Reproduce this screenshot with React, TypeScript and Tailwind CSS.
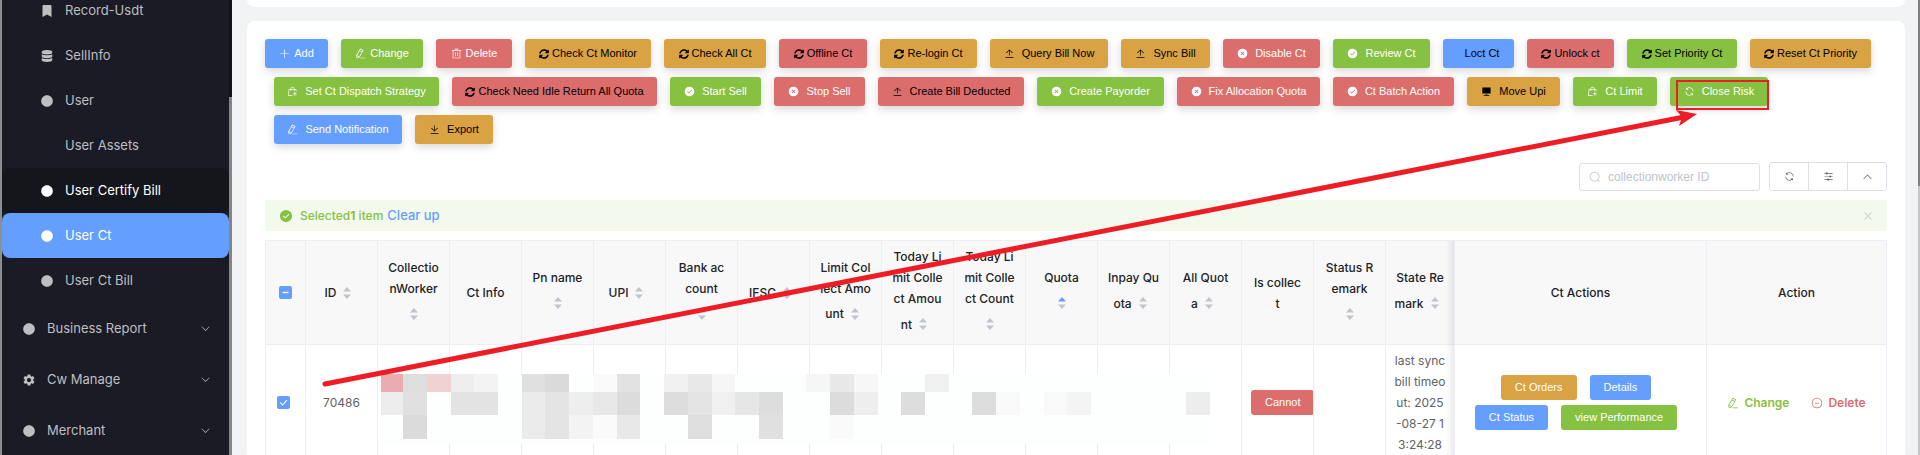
import clsx from "clsx";
import { FaBookmark, FaCircle, FaDatabase, FaSyncAlt } from "react-icons/fa";
import { MdSettings } from "react-icons/md";

const icons = {
  plus: "M480 480V128a32 32 0 0 1 64 0v352h352a32 32 0 1 1 0 64H544v352a32 32 0 1 1-64 0V544H128a32 32 0 0 1 0-64z",
  edit: "m199.04 672.64 193.984 112 224-387.968-193.92-112-224 388.032zm-23.872 60.16 32.896 148.288 144.896-45.696zM455.04 229.248l193.92 112 56.704-98.112-193.984-112-56.64 98.112zM104.32 708.8l384-665.024 304.768 175.936L409.152 884.8h.064l-248.448 78.336zm384 254.272v-64h448v64z",
  trash: "M160 256H96a32 32 0 0 1 0-64h256V95.936a32 32 0 0 1 32-32h256a32 32 0 0 1 32 32V192h256a32 32 0 1 1 0 64h-64v672a32 32 0 0 1-32 32H192a32 32 0 0 1-32-32zm448-64v-64H416v64zM224 896h576V256H224zm192-128a32 32 0 0 1-32-32V416a32 32 0 0 1 64 0v320a32 32 0 0 1-32 32m192 0a32 32 0 0 1-32-32V416a32 32 0 0 1 64 0v320a32 32 0 0 1-32 32",
  upload: "M160 832h704a32 32 0 1 1 0 64H160a32 32 0 1 1 0-64m384-578.304V704h-64V247.296L237.248 490.048 192 444.8 508.8 128l316.8 316.8-45.312 45.248z",
  download: "M160 832h704a32 32 0 1 1 0 64H160a32 32 0 1 1 0-64m384-253.696 236.288-236.352 45.248 45.248L508.8 704 192 387.2l45.248-45.248L480 584.704V128h64z",
  check: "M512 64a448 448 0 1 1 0 896 448 448 0 0 1 0-896m-55.808 536.384-99.52-99.584a38.4 38.4 0 1 0-54.336 54.336l126.72 126.72a38.272 38.272 0 0 0 54.336 0l262.4-262.464a38.4 38.4 0 1 0-54.272-54.336z",
  cross: "M512 64a448 448 0 1 1 0 896 448 448 0 0 1 0-896m0 393.664L407.936 353.6a38.4 38.4 0 1 0-54.336 54.336L457.664 512 353.6 616.064a38.4 38.4 0 1 0 54.336 54.336L512 566.336 616.064 670.4a38.4 38.4 0 1 0 54.336-54.336L566.336 512 670.4 407.936a38.4 38.4 0 1 0-54.336-54.336z",
  refresh: "M771.776 794.88A384 384 0 0 1 128 512h64a320 320 0 0 0 555.712 216.448H654.72a32 32 0 1 1 0-64h149.056a32 32 0 0 1 32 32v148.928a32 32 0 1 1-64 0v-50.56zM276.288 295.616h92.992a32 32 0 0 1 0 64H220.16a32 32 0 0 1-32-32V178.56a32 32 0 0 1 64 0v50.56A384 384 0 0 1 896.128 512h-64a320 320 0 0 0-555.776-216.384z",
  search: "m795.904 750.72 124.992 124.928a32 32 0 0 1-45.248 45.248L750.656 795.904a416 416 0 1 1 45.248-45.248zM480 832a352 352 0 1 0 0-704 352 352 0 0 0 0 704",
  up: "m488.832 344.32-339.84 356.672a32 32 0 0 0 0 44.16l.384.384a29.44 29.44 0 0 0 42.688 0l320-335.872 319.872 335.872a29.44 29.44 0 0 0 42.688 0l.384-.384a32 32 0 0 0 0-44.16L535.168 344.32a32 32 0 0 0-46.336 0",
  down: "M831.872 340.864 512 652.672 192.128 340.864a30.592 30.592 0 0 0-42.752 0 29.12 29.12 0 0 0 0 41.6L489.664 714.24a32 32 0 0 0 44.672 0l340.288-331.712a29.12 29.12 0 0 0 0-41.728 30.592 30.592 0 0 0-42.752 0z",
  close: "M764.288 214.592 512 466.88 259.712 214.592a31.936 31.936 0 0 0-45.12 45.12L466.752 512 214.528 764.224a31.936 31.936 0 1 0 45.12 45.184L512 557.184l252.288 252.288a31.936 31.936 0 0 0 45.12-45.12L557.12 512.064l252.288-252.352a31.936 31.936 0 1 0-45.12-45.184z",
  remove: "M352 480h320a32 32 0 1 1 0 64H352a32 32 0 0 1 0-64M512 896a384 384 0 1 0 0-768 384 384 0 0 0 0 768m0 64a448 448 0 1 1 0-896 448 448 0 0 1 0 896",
  operation: "M389.44 768a96.064 96.064 0 0 1 181.12 0H896v64H570.56a96.064 96.064 0 0 1-181.12 0H128v-64zm192-288a96.064 96.064 0 0 1 181.12 0H896v64H762.56a96.064 96.064 0 0 1-181.12 0H128v-64zm-320-288a96.064 96.064 0 0 1 181.12 0H896v64H442.56a96.064 96.064 0 0 1-181.12 0H128v-64z",
  sell: "M704 288h131.072a32 32 0 0 1 31.808 28.8L886.4 512h-64.384l-16-160H704v96a32 32 0 1 1-64 0v-96H384v96a32 32 0 0 1-64 0v-96H217.92l-51.2 512H512v64H131.328a32 32 0 0 1-31.808-35.2l57.6-576a32 32 0 0 1 31.808-28.8H320v-22.336C320 154.688 405.504 64 512 64s192 90.688 192 201.664v22.4zm-64 0v-22.336C640 189.248 582.272 128 512 128c-70.272 0-128 61.248-128 137.664v22.4h256zm201.408 483.84L768 698.496V928a32 32 0 1 1-64 0V698.496l-73.344 73.344a32 32 0 1 1-45.248-45.248l128-128a32 32 0 0 1 45.248 0l128 128a32 32 0 1 1-45.248 45.248",
  monitor: "M448 832v-64h128v64h192v64H256v-64zM128 704V128h768v576z",
};

type IconName = keyof typeof icons;

const Icon = ({ name, className }: { name: IconName; className?: string }) => (
  <svg viewBox="0 0 1024 1024" fill="currentColor" fillRule="evenodd" className={clsx("shrink-0", className)} aria-hidden="true">
    <path d={icons[name]} />
  </svg>
);

const tones = {
  blue: "bg-[#649eff]",
  green: "bg-[#86c142]",
  red: "bg-[#dc6d6d]",
  amber: "bg-[#d9a243]",
};

type Tone = keyof typeof tones;
type Tool = { label: string; tone: Tone; icon: IconName | "sync" | "none"; width: string; dark?: boolean; tight?: boolean };

const toolRows: Tool[][] = [
  [
    { label: "Add", tone: "blue", icon: "plus", width: "w-[63px]", tight: true },
    { label: "Change", tone: "green", icon: "edit", width: "w-[82px]", tight: true },
    { label: "Delete", tone: "red", icon: "trash", width: "w-[76px]", tight: true },
    { label: "Check Ct Monitor", tone: "amber", icon: "sync", width: "w-[126px]", dark: true },
    { label: "Check All Ct", tone: "amber", icon: "sync", width: "w-[102px]", dark: true },
    { label: "Offline Ct", tone: "red", icon: "sync", width: "w-[88px]", dark: true },
    { label: "Re-login Ct", tone: "amber", icon: "sync", width: "w-[97px]", dark: true },
    { label: "Query Bill Now", tone: "amber", icon: "upload", width: "w-[118px]", dark: true },
    { label: "Sync Bill", tone: "amber", icon: "upload", width: "w-[89px]", dark: true },
    { label: "Disable Ct", tone: "red", icon: "cross", width: "w-[97px]" },
    { label: "Review Ct", tone: "green", icon: "check", width: "w-[97px]" },
    { label: "Loct Ct", tone: "blue", icon: "none", width: "w-[71px]", dark: true },
    { label: "Unlock ct", tone: "red", icon: "sync", width: "w-[87px]", dark: true },
    { label: "Set Priority Ct", tone: "green", icon: "sync", width: "w-[110px]", dark: true },
    { label: "Reset Ct Priority", tone: "amber", icon: "sync", width: "w-[121px]", dark: true },
  ],
  [
    { label: "Set Ct Dispatch Strategy", tone: "green", icon: "sell", width: "w-[165px]" },
    { label: "Check Need Idle Return All Quota", tone: "red", icon: "sync", width: "w-[205px]", dark: true },
    { label: "Start Sell", tone: "green", icon: "check", width: "w-[91px]" },
    { label: "Stop Sell", tone: "red", icon: "cross", width: "w-[91px]" },
    { label: "Create Bill Deducted", tone: "red", icon: "upload", width: "w-[146px]", dark: true },
    { label: "Create Payorder", tone: "green", icon: "cross", width: "w-[127px]" },
    { label: "Fix Allocation Quota", tone: "red", icon: "cross", width: "w-[143px]" },
    { label: "Ct Batch Action", tone: "red", icon: "check", width: "w-[121px]" },
    { label: "Move Upi", tone: "amber", icon: "monitor", width: "w-[93px]", dark: true },
    { label: "Ct Limit", tone: "green", icon: "sell", width: "w-[84px]" },
    { label: "Close Risk", tone: "green", icon: "refresh", width: "w-[98px]" },
  ],
  [
    { label: "Send Notification", tone: "blue", icon: "edit", width: "w-[128px]" },
    { label: "Export", tone: "amber", icon: "download", width: "w-[78px]", dark: true },
  ],
];

const ToolButton = ({ label, tone, icon, width, dark, tight }: Tool) => (
  <button
    type="button"
    className={clsx(
      "flex h-[29px] items-center justify-center whitespace-nowrap rounded-[3px] shadow-[0_3px_8px_rgba(0,0,0,0.16)]",
      width,
      tones[tone],
      dark ? "text-black" : "text-white",
      icon === "sync" ? "gap-[3px]" : tight ? "gap-1" : "gap-[7px]",
    )}
  >
    {icon === "sync" && <FaSyncAlt className="size-[10px]" />}
    {icon !== "sync" && icon !== "none" && <Icon name={icon} className="size-[11px]" />}
    <span className={clsx(icon === "none" && "pl-[7px]")}>{label}</span>
  </button>
);

const subMenu = [
  { label: "Record-Usdt", icon: <FaBookmark className="size-3" /> },
  { label: "SellInfo", icon: <FaDatabase className="size-3" /> },
  { label: "User", icon: <FaCircle className="size-3" /> },
  { label: "User Assets", icon: null },
  { label: "User Certify Bill", icon: <FaCircle className="size-3" />, state: "hover" },
  { label: "User Ct", icon: <FaCircle className="size-3" />, state: "active" },
  { label: "User Ct Bill", icon: <FaCircle className="size-3" /> },
];

const mainMenu = [
  { label: "Business Report", icon: <FaCircle className="size-3" /> },
  { label: "Cw Manage", icon: <MdSettings className="-mx-px size-[14px]" /> },
  { label: "Merchant", icon: <FaCircle className="size-3" /> },
];

const Sidebar = () => (
  <aside className="flex w-[232px] shrink-0 border-l-2 border-[#8c8e8f] bg-[#1b1b25] text-[13px] text-[#bfbfc1]">
    <nav className="-mt-3 flex-1">
      <ul>
        {subMenu.map((item) => (
          <li key={item.label}>
            <a
              href="#"
              className={clsx(
                "flex h-[45px] items-center gap-3 rounded-lg pl-[39px]",
                item.state === "hover" && "bg-[#15151c] text-white",
                item.state === "active" && "bg-[#649eff] text-white",
              )}
            >
              <span className="flex w-3 justify-center">{item.icon}</span>
              {item.label}
            </a>
          </li>
        ))}
        {mainMenu.map((item) => (
          <li key={item.label}>
            <button type="button" className="flex h-[51px] w-full items-center gap-3 pl-[21px] pr-[18px]">
              <span className="flex w-3 justify-center">{item.icon}</span>
              {item.label}
              <Icon name="down" className="ml-auto size-[11px]" />
            </button>
          </li>
        ))}
      </ul>
    </nav>
    <div className="w-[3px] bg-[#15111a] pt-[97px]">
      <div className="h-full bg-[#858585]" />
    </div>
  </aside>
);

type Column = { lines: string[]; sort?: "inline" | "below"; ascending?: boolean };

const columns: Column[] = [
  { lines: ["ID"], sort: "inline" },
  { lines: ["Collectio", "nWorker"], sort: "below" },
  { lines: ["Ct Info"] },
  { lines: ["Pn name"], sort: "below" },
  { lines: ["UPI"], sort: "inline" },
  { lines: ["Bank ac", "count"], sort: "below" },
  { lines: ["IFSC"], sort: "inline" },
  { lines: ["Limit Col", "lect Amo", "unt"], sort: "inline" },
  { lines: ["Today Li", "mit Colle", "ct Amou", "nt"], sort: "inline" },
  { lines: ["Today Li", "mit Colle", "ct Count"], sort: "below" },
  { lines: ["Quota"], sort: "below", ascending: true },
  { lines: ["Inpay Qu", "ota"], sort: "inline" },
  { lines: ["All Quot", "a"], sort: "inline" },
  { lines: ["Is collec", "t"] },
  { lines: ["Status R", "emark"], sort: "below" },
  { lines: ["State Re", "mark"], sort: "inline" },
];

const SortCaret = ({ ascending }: { ascending?: boolean }) => (
  <span className="flex w-[22px] justify-center">
    <svg width="8" height="12" viewBox="0 0 8 12" aria-hidden="true">
      <path d="M0 4.5 4 0l4 4.5z" fill={ascending ? "#649eff" : "#c0c4cc"} />
      <path d="M0 7.5 4 12l4-4.5z" fill="#c0c4cc" />
    </svg>
  </span>
);

const HeaderCell = ({ column }: { column: Column }) => {
  const inline = column.sort === "inline";
  const lines = inline ? column.lines.slice(0, -1) : column.lines;

  return (
    <th className="whitespace-nowrap border-b border-r border-[#ebeef5] font-medium">
      {lines.map((line) => (
        <div key={line}>{line}</div>
      ))}
      {column.sort && (
        <div className="flex h-[30px] items-center justify-center">
          {inline && column.lines[column.lines.length - 1]}
          <SortCaret ascending={column.ascending} />
        </div>
      )}
    </th>
  );
};

const FixedShadow = () => (
  <span className="absolute -left-[9px] -bottom-px top-0 w-2 bg-linear-to-r from-transparent to-black/8" aria-hidden="true" />
);

const SmallButton = ({ label, tone }: { label: string; tone: Tone }) => (
  <button type="button" className={clsx("h-[25px] whitespace-nowrap rounded-[3px] px-[14px] text-[11px] leading-none text-white font-['Liberation_Sans',Arial,sans-serif]", tones[tone])}>
    {label}
  </button>
);

const CheckBox = ({ label, partial }: { label: string; partial?: boolean }) => (
  <label className="relative mx-auto block size-[13px]">
    <input type="checkbox" defaultChecked aria-label={label} className="block size-[13px] appearance-none rounded-[2px] bg-[#649eff]" />
    <svg viewBox="0 0 13 13" className="pointer-events-none absolute inset-0" fill="none" stroke="white" aria-hidden="true">
      <path d={partial ? "M3.5 6.5h6" : "M3.2 6.4 5.6 9l4.3-4.8"} strokeWidth={partial ? 1.4 : 1.1} />
    </svg>
  </label>
);

const DataTable = () => (
  <table className="w-full table-fixed border-separate border-spacing-0 border-l border-t border-[#ebeef5] text-center text-xs leading-[21px] text-[#606266]">
    <colgroup>
      <col className="w-10" />
      {columns.map((column, i) => (
        <col key={i} className={i === columns.length - 1 ? "w-[69px]" : "w-[72px]"} />
      ))}
      <col />
      <col className="w-[180px]" />
    </colgroup>
    <thead className="bg-[#f8f8f9] text-[#222226]">
      <tr className="h-[104px]">
        <th className="border-b border-r border-[#ebeef5]">
          <CheckBox label="Select all rows" partial />
        </th>
        {columns.map((column, i) => (
          <HeaderCell key={i} column={column} />
        ))}
        <th className="relative border-b border-r border-[#ebeef5] font-medium">
          <FixedShadow />
          Ct Actions
        </th>
        <th className="border-b border-r border-[#ebeef5] font-medium">Action</th>
      </tr>
    </thead>
    <tbody>
      <tr className="h-[116px]">
        <td className="border-b border-r border-[#ebeef5] pr-1">
          <CheckBox label="Select row 70486" />
        </td>
        <td className="border-b border-r border-[#ebeef5]">70486</td>
        {columns.slice(1, 13).map((column, i) => (
          <td key={i} className="border-b border-r border-[#ebeef5]" />
        ))}
        <td className="overflow-hidden border-b border-r border-[#ebeef5] pl-[9px] text-left">
          <SmallButton label="Cannot" tone="red" />
        </td>
        <td className="border-b border-r border-[#ebeef5]" />
        <td className="whitespace-nowrap border-b border-r border-[#ebeef5]">
          last sync
          <br />
          bill timeo
          <br />
          ut: 2025
          <br />
          -08-27 1
          <br />
          3:24:28
        </td>
        <td className="relative border-b border-r border-[#ebeef5] pr-[9px]">
          <FixedShadow />
          <div className="flex flex-wrap justify-center gap-x-[13px] gap-y-[5px] px-3">
            <SmallButton label="Ct Orders" tone="amber" />
            <SmallButton label="Details" tone="blue" />
            <SmallButton label="Ct Status" tone="blue" />
            <SmallButton label="view Performance" tone="green" />
          </div>
        </td>
        <td className="border-b border-r border-[#ebeef5]">
          <div className="flex items-center justify-center gap-[22px] font-semibold">
            <a href="#" className="flex items-center gap-[5px] text-[#86c142]">
              <Icon name="edit" className="size-3" />
              Change
            </a>
            <a href="#" className="flex items-center gap-[5px] text-[#dc6d6d]">
              <Icon name="remove" className="size-3" />
              Delete
            </a>
          </div>
        </td>
      </tr>
    </tbody>
  </table>
);

// x, y, width, height, fill
const mosaic: [number, number, number, number, string][] = [
  [0, 0, 22, 18, "#e8acb1"], [22, 0, 24, 18, "#dedede"], [46, 0, 24, 18, "#f0d2d5"], [70, 0, 23, 18, "#eeeeee"], [93, 0, 24, 18, "#f3f3f3"],
  [141, 0, 23, 18, "#e0e0e0"], [164, 0, 24, 18, "#dadada"], [212, 0, 24, 18, "#fafafa"], [236, 0, 23, 18, "#e2e2e2"],
  [283, 0, 24, 18, "#f1f1f1"], [307, 0, 24, 18, "#e8e8e8"], [331, 0, 23, 18, "#f6f6f6"],
  [425, 0, 24, 18, "#f6f6f6"], [449, 0, 24, 18, "#e8e8e8"], [473, 0, 24, 18, "#f7f7f7"], [544, 0, 24, 18, "#f0f0f0"],
  [0, 18, 22, 23, "#ededed"], [22, 18, 24, 23, "#e0e0e0"], [70, 18, 47, 23, "#e3e3e3"],
  [141, 18, 23, 23, "#ebebeb"], [164, 18, 24, 23, "#e4e4e4"], [188, 18, 24, 23, "#eeeeee"], [212, 18, 24, 23, "#e8e8e8"], [236, 18, 23, 23, "#dcdcdc"],
  [283, 18, 24, 23, "#dddddd"], [307, 18, 24, 23, "#e4e4e4"], [331, 18, 23, 23, "#f0f0f0"], [354, 18, 24, 23, "#e6e6e6"], [378, 18, 24, 23, "#dddddd"],
  [449, 18, 24, 23, "#dcdcdc"], [473, 18, 24, 23, "#eeeeee"], [520, 18, 24, 23, "#dddddd"], [591, 18, 24, 23, "#dddddd"], [615, 18, 24, 23, "#f9f9f9"],
  [663, 18, 23, 23, "#f9f9f9"], [686, 18, 24, 23, "#f4f4f4"], [805, 18, 24, 23, "#ededed"],
  [22, 41, 24, 24, "#dbdbdb"], [141, 41, 23, 24, "#ebebeb"], [164, 41, 24, 24, "#e4e4e4"], [188, 41, 24, 24, "#f3f3f3"], [212, 41, 24, 24, "#fafafa"], [236, 41, 23, 24, "#e8e8e8"],
  [307, 41, 24, 24, "#dedede"], [378, 41, 24, 24, "#e0e0e0"], [449, 41, 24, 24, "#fafafa"],
];

const Mosaic = () => (
  <svg width="829" height="70" className="absolute left-[116px] top-[134px]" shapeRendering="crispEdges" aria-hidden="true">
    <rect width="829" height="70" fill="#fdfefe" />
    {mosaic.map(([x, y, width, height, fill]) => (
      <rect key={`${x}-${y}`} x={x} y={y} width={width} height={height} fill={fill} />
    ))}
  </svg>
);

const Annotation = () => (
  <svg width="1920" height="455" className="pointer-events-none absolute left-0 top-0" aria-hidden="true">
    <rect x="1677" y="81" width="91" height="28" fill="none" stroke="#ee1c25" strokeWidth="2" />
    <path d="M325 384 1684 117" stroke="#ee1c25" strokeWidth="5" strokeLinecap="round" />
    <path d="m1676 110 21 4-18 12 3-9z" fill="#ee1c25" />
  </svg>
);

export default function App() {
  return (
    <div className="relative flex h-screen overflow-hidden bg-[#f2f3f5] font-['Inter','Noto_Sans',sans-serif]">
      <Sidebar />
      <main className="min-w-0 flex-1 pl-[15px] pr-[13px]">
        <div className="h-[7px] rounded-b-lg bg-white" />
        <section className="mt-[14px] rounded-lg bg-white px-[18px] pt-[18px]">
          <div className="flex flex-col gap-[9px] text-[11px] font-['Liberation_Sans',Arial,sans-serif]">
            {toolRows.map((row, i) => (
              <div key={i} className={clsx("flex flex-wrap gap-x-[13px] gap-y-[9px]", i > 0 && "pl-[9px]")}>
                {row.map((tool) => (
                  <ToolButton key={tool.label} {...tool} />
                ))}
              </div>
            ))}
          </div>

          <div className="mt-[18px] flex items-center justify-end gap-[9px]">
            <label className="flex h-7 w-[181px] items-center gap-[7px] rounded-[3px] border border-[#dcdfe6] px-[9px] text-[#c0c4cc]">
              <Icon name="search" className="size-3" />
              <input
                type="text"
                aria-label="collectionworker ID"
                placeholder="collectionworker ID"
                className="min-w-0 flex-1 text-xs text-[#606266] outline-none placeholder:text-[#c0c4cc] font-['Liberation_Sans',Arial,sans-serif]"
              />
            </label>
            <div className="flex h-[29px] w-[118px] divide-x divide-[#dcdfe6] rounded-[3px] border border-[#dcdfe6] text-[#606266]">
              <button type="button" aria-label="Refresh" className="flex flex-1 items-center justify-center">
                <Icon name="refresh" className="size-[11px]" />
              </button>
              <button type="button" aria-label="Columns" className="flex flex-1 items-center justify-center">
                <Icon name="operation" className="size-[11px]" />
              </button>
              <button type="button" aria-label="Collapse" className="flex flex-1 items-center justify-center">
                <Icon name="up" className="size-[11px]" />
              </button>
            </div>
          </div>

          <div className="mt-[9px] flex h-[31px] items-center rounded-[3px] bg-[#f3f9ec] pl-[14px] pr-[13px] text-xs text-[#86c142]">
            <Icon name="check" className="size-[14px]" />
            <span className="ml-[7px] font-medium">
              Selected<b className="font-bold">1</b> item
            </span>
            <a href="#" className="ml-1 text-[13px] font-medium text-[#649eff]">
              Clear up
            </a>
            <button type="button" aria-label="Close" className="ml-auto text-[#c0c4cc]">
              <Icon name="close" className="size-3" />
            </button>
          </div>

          <div className="relative mt-[9px]">
            <DataTable />
            <Mosaic />
          </div>
        </section>
      </main>
      <div className="w-[2px] bg-[#c6c7c9]">
        <div className="h-[186px] bg-[#7f7f7f]" />
      </div>
      <Annotation />
    </div>
  );
}
